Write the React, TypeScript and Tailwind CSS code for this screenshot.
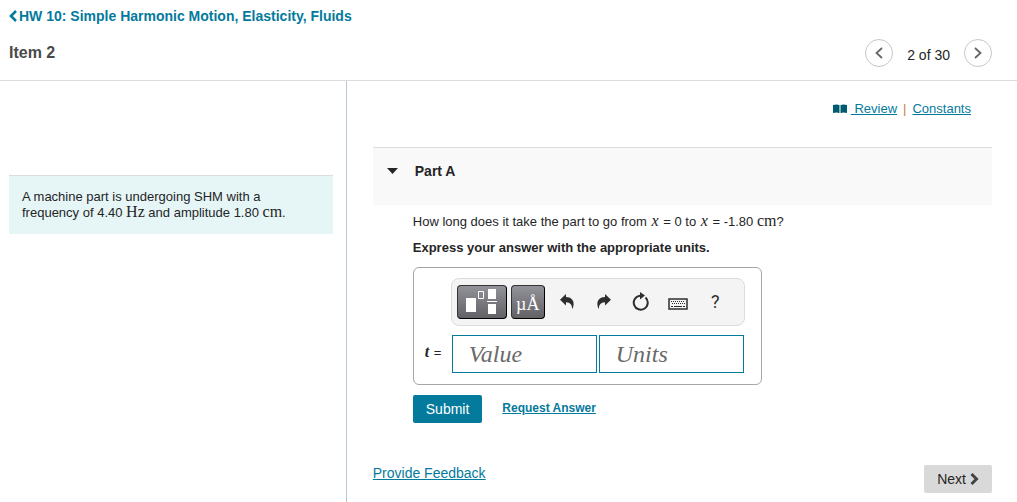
import type { ReactNode } from "react";

function MathText({ children }: { children: ReactNode }) {
  return <span className="font-['Liberation_Serif',serif] text-base leading-3">{children}</span>;
}

function Variable({ children }: { children: ReactNode }) {
  return (
    <i className="px-px font-['Liberation_Serif',serif] text-base leading-3">{children}</i>
  );
}

function Chevron({ direction }: { direction: "left" | "right" }) {
  return (
    <svg width="10" height="14" viewBox="0 0 10 14" fill="none" stroke="#666" strokeWidth="1.8" aria-hidden="true">
      <path d={direction === "left" ? "M8 2 2.5 7 8 12" : "M2 2 7.5 7 2 12"} />
    </svg>
  );
}

function Header() {
  return (
    <header className="border-b border-[#dcdcdc] pt-2 pr-[25px] pb-[13px] pl-[9px]">
      <a href="#assignment" className="flex items-center gap-0.5 text-sm leading-4 font-bold text-[#047a9c]">
        <svg width="8" height="12" viewBox="0 0 8 12" fill="none" stroke="currentColor" strokeWidth="2.6" aria-hidden="true">
          <path d="M7 1 2 6l5 5" />
        </svg>
        HW 10: Simple Harmonic Motion, Elasticity, Fluids
      </a>
      <div className="mt-[15px] flex items-center justify-between">
        <h1 className="text-base leading-7 font-bold text-[#4a4a4a]">Item 2</h1>
        <nav className="flex items-center gap-3.5" aria-label="Items">
          <button
            type="button"
            aria-label="Previous item"
            className="flex size-7 items-center justify-center rounded-full border border-[#c7c7c7]"
          >
            <Chevron direction="left" />
          </button>
          <span className="pt-1 text-sm leading-5 text-[#252525]">2 of 30</span>
          <button
            type="button"
            aria-label="Next item"
            className="flex size-7 items-center justify-center rounded-full border border-[#c7c7c7]"
          >
            <Chevron direction="right" />
          </button>
        </nav>
      </div>
    </header>
  );
}

function TemplateIcon() {
  return (
    <svg width="32" height="26" viewBox="0 0 32 26" aria-hidden="true">
      <path fill="#fff" d="M0 9h10v14H0zM22 0h8v10h-8zM21 12h10v1H21zM22 15h8v10h-8z" />
      <path fill="none" stroke="#fff" d="M12.5 2.5h5v7h-5z" />
    </svg>
  );
}

function UndoIcon() {
  return (
    <svg width="14" height="16" viewBox="0 0 14 16" fill="#2e2e2e" aria-hidden="true">
      <path d="M6 0v3C11 3.200 14 6 13.600 10.500c-.1 2-.8 3.700-1.600 4.500.3-3.800-1.500-6.500-6-6.700V11.500L0 5.700z" />
    </svg>
  );
}

function RedoIcon() {
  return (
    <svg width="14" height="16" viewBox="0 0 14 16" fill="#2e2e2e" aria-hidden="true">
      <path d="M8 0v3C3 3.200 0 6 .4 10.500c.1 2 .8 3.700 1.600 4.500-.3-3.800 1.500-6.500 6-6.700V11.500l6-5.800z" />
    </svg>
  );
}

function ResetIcon() {
  return (
    <svg width="18" height="20" viewBox="0 0 18 20" aria-hidden="true">
      <path d="M13.500 5.500a7 7 0 1 1-5.500-1.800" fill="none" stroke="#2e2e2e" strokeWidth="2" />
      <path d="M8 0l5 3.500-5 4z" fill="#2e2e2e" />
    </svg>
  );
}

function KeyboardIcon() {
  return (
    <svg width="20" height="12" viewBox="0 0 20 12" fill="none" stroke="#2e2e2e" className="mt-1" aria-hidden="true">
      <rect x="1" y="1" width="18" height="10" strokeWidth="1.500" />
      <path d="M3 3.500h14M4 5.500h13" strokeDasharray="1 1" />
      <path d="M3 8.500h2M6 8.500h8M15 8.500h2" />
    </svg>
  );
}

const actions = [
  { label: "Undo", icon: <UndoIcon /> },
  { label: "Redo", icon: <RedoIcon /> },
  { label: "Reset", icon: <ResetIcon /> },
  { label: "Keyboard shortcuts", icon: <KeyboardIcon /> },
  { label: "Help", icon: "?" },
];

function Toolbar() {
  const darkButton =
    "flex h-[34px] items-center justify-center rounded border border-[#333] border-r-black border-b-black bg-linear-to-b from-[#92929a] to-[#626266]";

  return (
    <div className="flex h-12 items-center gap-1 rounded-lg border border-[#dcdcdc] bg-[#f4f4f4] px-[5px]">
      <button type="button" aria-label="Templates" className={`${darkButton} w-[50px]`}>
        <TemplateIcon />
      </button>
      <button
        type="button"
        aria-label="Units symbols"
        className={`${darkButton} w-[34px] pt-1 font-['Liberation_Serif',serif] text-lg leading-6 text-white`}
      >
        µÅ
      </button>
      <div className="flex flex-1">
        {actions.map((action) => (
          <button
            key={action.label}
            type="button"
            aria-label={action.label}
            className="flex h-8 w-[37px] items-center justify-center font-['Roboto',sans-serif] text-lg text-[#2e2e2e]"
          >
            {action.icon}
          </button>
        ))}
      </div>
    </div>
  );
}

function AnswerBox() {
  const field =
    "h-[38px] w-0 min-w-0 flex-1 border border-[#047a9c] bg-white px-4 font-['Liberation_Serif',serif] text-2xl italic placeholder:text-[#6a6a6a]";

  return (
    <div className="w-full max-w-[349px] rounded-md border border-[#a6a6a6] pt-2.5 pr-4 pb-[11px] pl-[11px]">
      <div className="pl-[26px]">
        <Toolbar />
      </div>
      <div className="mt-[9px] flex items-center pr-px">
        <label htmlFor="value" className="w-[27px] shrink-0 pb-1 text-[13px] text-[#252525]">
          <i className="pr-px font-['Liberation_Serif',serif] text-base font-bold">t</i> =
        </label>
        <div className="flex flex-1 gap-0.5">
          <input id="value" type="text" placeholder="Value" className={field} />
          <input type="text" aria-label="Units" placeholder="Units" className={field} />
        </div>
      </div>
    </div>
  );
}

function PartA() {
  return (
    <section>
      <div className="border-t border-[#dcdcdc] bg-[#f9f9f9] pt-3.5 pb-[25px] pl-3.5">
        <button type="button" aria-expanded="true" className="flex items-center text-sm leading-[18px] font-bold text-[#252525]">
          <svg width="11" height="6" viewBox="0 0 11 6" className="mr-[17px]" aria-hidden="true">
            <path d="M0 0h11L5.500 6z" fill="#252525" />
          </svg>
          Part A
        </button>
      </div>
      <div className="pt-[9px] pl-10">
        <p className="text-[13px] leading-4 text-[#252525]">
          How long does it take the part to go from <Variable>x</Variable> = 0 to <Variable>x</Variable> = -1.80{" "}
          <MathText>cm</MathText>?
        </p>
        <p className="mt-2.5 mb-[11px] text-[13px] leading-4 font-bold text-[#252525]">
          Express your answer with the appropriate units.
        </p>
        <AnswerBox />
        <div className="mt-2.5 flex items-center gap-5">
          <button type="submit" className="h-7 rounded-xs bg-[#047a9c] px-[13px] text-sm text-white">
            Submit
          </button>
          <a href="#answer" className="pb-0.5 text-xs font-bold text-[#047a9c] underline">
            Request Answer
          </a>
        </div>
      </div>
    </section>
  );
}

export default function App() {
  return (
    <div className="flex min-h-screen flex-col bg-white font-['Liberation_Sans',Arial,sans-serif]">
      <Header />
      <div className="flex flex-1">
        <aside className="w-[34%] shrink-0 pt-[94px] pr-[13px] pl-[9px]">
          <p className="border-t border-[#dcdcdc] bg-[#e6f6f7] pt-[13px] pr-10 pb-[13px] pl-[13px] text-[13px] leading-4 text-[#252525]">
            A machine part is undergoing SHM with a frequency of 4.40 <MathText>Hz</MathText> and amplitude 1.80{" "}
            <MathText>cm</MathText>.
          </p>
        </aside>
        <main className="min-w-0 flex-1 border-l border-[#b8c6d6] pt-[18px] pr-[25px] pl-[26px]">
          <div className="mb-7 flex items-center justify-end gap-1.5 pr-[21px] text-[13px] leading-5 text-[#047a9c]">
            <a href="#review" className="flex items-center gap-1">
              <svg width="14" height="10" viewBox="0 0 14 10" fill="#005a70" aria-hidden="true">
                <path d="M0 1q3.500-1 6.500 0v8q-3-1-6.500 0zM7.500 1q3-1 6.500 0v8q-3.500-1-6.500 0z" />
              </svg>
              <span className="whitespace-pre underline"> Review</span>
            </a>
            <span className="text-[#c4803a]">|</span>
            <a href="#constants" className="underline">
              Constants
            </a>
          </div>
          <PartA />
          <footer className="mt-[42px] flex items-start justify-between pb-2">
            <a href="#feedback" className="text-sm leading-4 text-[#047a9c] underline">
              Provide Feedback
            </a>
            <button type="button" className="flex h-7 items-center gap-1 rounded-xs bg-[#d9d9d9] px-[13px] text-sm text-[#252525]">
              Next
              <svg width="9" height="12" viewBox="0 0 9 12" fill="none" stroke="#444" strokeWidth="3" aria-hidden="true">
                <path d="M1.500 1 6.500 6l-5 5" />
              </svg>
            </button>
          </footer>
        </main>
      </div>
    </div>
  );
}
